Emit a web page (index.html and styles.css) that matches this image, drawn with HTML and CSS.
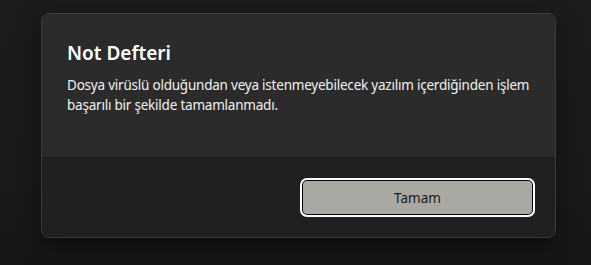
FILE: index.html
```html
<!DOCTYPE html>
<html lang="tr">
<head>
    <meta charset="UTF-8">
    <title>Not Defteri</title>
    <link rel="stylesheet" href="styles.css">
</head>
<body>
    <div class="dialog">
        <div class="content">
            <h1 class="title">Not Defteri</h1>
            <p class="message">Dosya virüslü olduğundan veya istenmeyebilecek yazılım içerdiğinden işlem başarılı bir şekilde tamamlanmadı.</p>
        </div>
        <div class="footer">
            <button class="ok-button">Tamam</button>
        </div>
    </div>
</body>
</html>
```

FILE: styles.css
```css
body {
    margin: 0;
    height: 265px;
    background: linear-gradient(#1c1c1c, #1a1a1a 70%, #161616);
    font-family: "Noto Sans", "Open Sans", sans-serif;
    color: #ffffff;
    overflow: hidden;
}

.dialog {
    margin: 13px 0 0 41px;
    width: 513px;
    height: 223px;
    border: 1px solid #3b3b3b;
    border-radius: 8px;
    overflow: hidden;
    display: flex;
    flex-direction: column;
    box-shadow: 0 8px 24px rgba(0, 0, 0, 0.45);
}

.content {
    background: #2b2b2b;
    height: 143px;
    box-sizing: border-box;
    padding: 26px 12px 0 25px;
}

.title {
    margin: 0 0 9px;
    font-size: 19px;
    font-weight: 600;
    line-height: 26px;
}

.message {
    margin: 0;
    font-size: 13.5px;
    line-height: 20px;
    letter-spacing: -0.22px;
    color: #f2f2f2;
}

.footer {
    flex: 1;
    background: #202020;
    display: flex;
    justify-content: flex-end;
    align-items: flex-start;
    padding: 22px 21px 0 0;
}

.ok-button {
    width: 233px;
    height: 37px;
    background: #a9a8a3;
    border: 1px solid #000000;
    border-radius: 6px;
    outline: 2px solid #ffffff;
    outline-offset: -1px;
    font-family: inherit;
    font-size: 13.5px;
    color: #1a1a1a;
    box-shadow: inset 0 0 0 1px #000;
}
```
